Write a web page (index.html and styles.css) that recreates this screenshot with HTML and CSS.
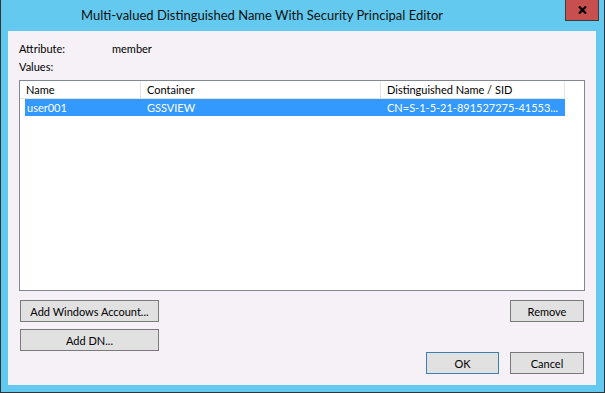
FILE: index.html
```html
<!DOCTYPE html>
<html lang="en-US">
    <head>
        <meta charset="utf-8">
        <title>Multi-valued Distinguished Name With Security Principal Editor</title>
        <link rel="stylesheet" href="styles.css">
    </head>
    <body>
        <div class="window">
            <div class="titlebar">
                <div class="title">Multi-valued Distinguished Name With Security Principal Editor</div>
                <div class="close">
                    <svg width="9" height="8" viewBox="0 0 9 8"><path d="M1 0.5 L8 7.5 M8 0.5 L1 7.5" stroke="#000" stroke-width="2.2"/></svg>
                </div>
            </div>
            <div class="content">
                <div class="info">
                    <span>Attribute:</span><span>member</span>
                    <span>Values:</span><span></span>
                </div>
                <div class="listbox">
                    <div class="row header">
                        <div class="cell c1">Name</div>
                        <div class="cell c2">Container</div>
                        <div class="cell c3">Distinguished Name / SID</div>
                    </div>
                    <div class="row item selected">
                        <div class="cell c1">user001</div>
                        <div class="cell c2">GSSVIEW</div>
                        <div class="cell c3">CN=S-1-5-21-891527275-41553...</div>
                    </div>
                </div>
                <div class="footer">
                    <div class="left-buttons">
                        <button class="btn wide">Add Windows Account...</button>
                        <button class="btn wide">Add DN...</button>
                    </div>
                    <div class="right-buttons">
                        <div class="btn-row">
                            <button class="btn">Remove</button>
                        </div>
                        <div class="btn-row">
                            <button class="btn default">OK</button>
                            <button class="btn">Cancel</button>
                        </div>
                    </div>
                </div>
            </div>
        </div>
    </body>
</html>
```

FILE: styles.css
```css
html, body {
    margin: 0;
    padding: 0;
}

body {
    font-family: Lato, "Noto Sans", sans-serif;
    font-size: 11px;
    color: #000;
}

.window {
    width: 605px;
    height: 393px;
    box-sizing: border-box;
    background: #63c9ef;
    border: 1px solid #2f3438;
    border-top: none;
    display: flex;
    flex-direction: column;
}

.titlebar {
    height: 31px;
    display: flex;
}

.title {
    flex: 1;
    text-align: center;
    font-size: 13px;
    line-height: 31px;
    padding-right: 42px;
    color: #111;
}

.close {
    width: 32px;
    height: 20px;
    margin-right: 5px;
    background: #c7504f;
    border: 1px solid #3c3c3c;
    border-top: none;
    display: flex;
    align-items: center;
    justify-content: center;
}

.content {
    flex: 1;
    margin: 0 8px 7px 7px;
    background: #f5f1f6;
    padding-top: 9px;
}

.info {
    display: grid;
    grid-template-columns: 93px auto;
    line-height: 18px;
    padding-left: 11px;
}

.listbox {
    margin: 4px 11px 0 11px;
    height: 211px;
    box-sizing: border-box;
    border: 1px solid #828790;
    background: #fff;
}

.row {
    display: flex;
    height: 17px;
    line-height: 17px;
    white-space: nowrap;
}

.header {
    height: 18px;
}

.header .cell {
    border-right: 1px solid #e5e5e5;
    border-bottom: 1px solid #e5e5e5;
}

.cell {
    padding-left: 6px;
    box-sizing: border-box;
    overflow: hidden;
}

.c1 {
    width: 121px;
}

.c2 {
    width: 240px;
}

.c3 {
    width: 184px;
}

.item {
    margin-left: 5px;
}

.item .c1 {
    width: 116px;
    padding-left: 2px;
}

.selected {
    width: 540px;
    background: #3399ff;
    color: #fff;
}

.footer {
    display: flex;
    justify-content: space-between;
    margin: 9px 12px 0 12px;
}

.left-buttons {
    display: flex;
    flex-direction: column;
    gap: 7px;
}

.right-buttons {
    display: flex;
    flex-direction: column;
    align-items: flex-end;
    gap: 30px;
}

.btn-row {
    display: flex;
    gap: 11px;
}

.btn {
    font-family: Lato, "Noto Sans", sans-serif;
    font-size: 11px;
    height: 22px;
    width: 74px;
    padding: 0;
    background: #e1e1e1;
    border: 1px solid #7a7a7a;
    color: #000;
}

.btn.wide {
    width: 139px;
}

.btn.default {
    width: 73px;
    border-color: #3c7fb1;
}
```
